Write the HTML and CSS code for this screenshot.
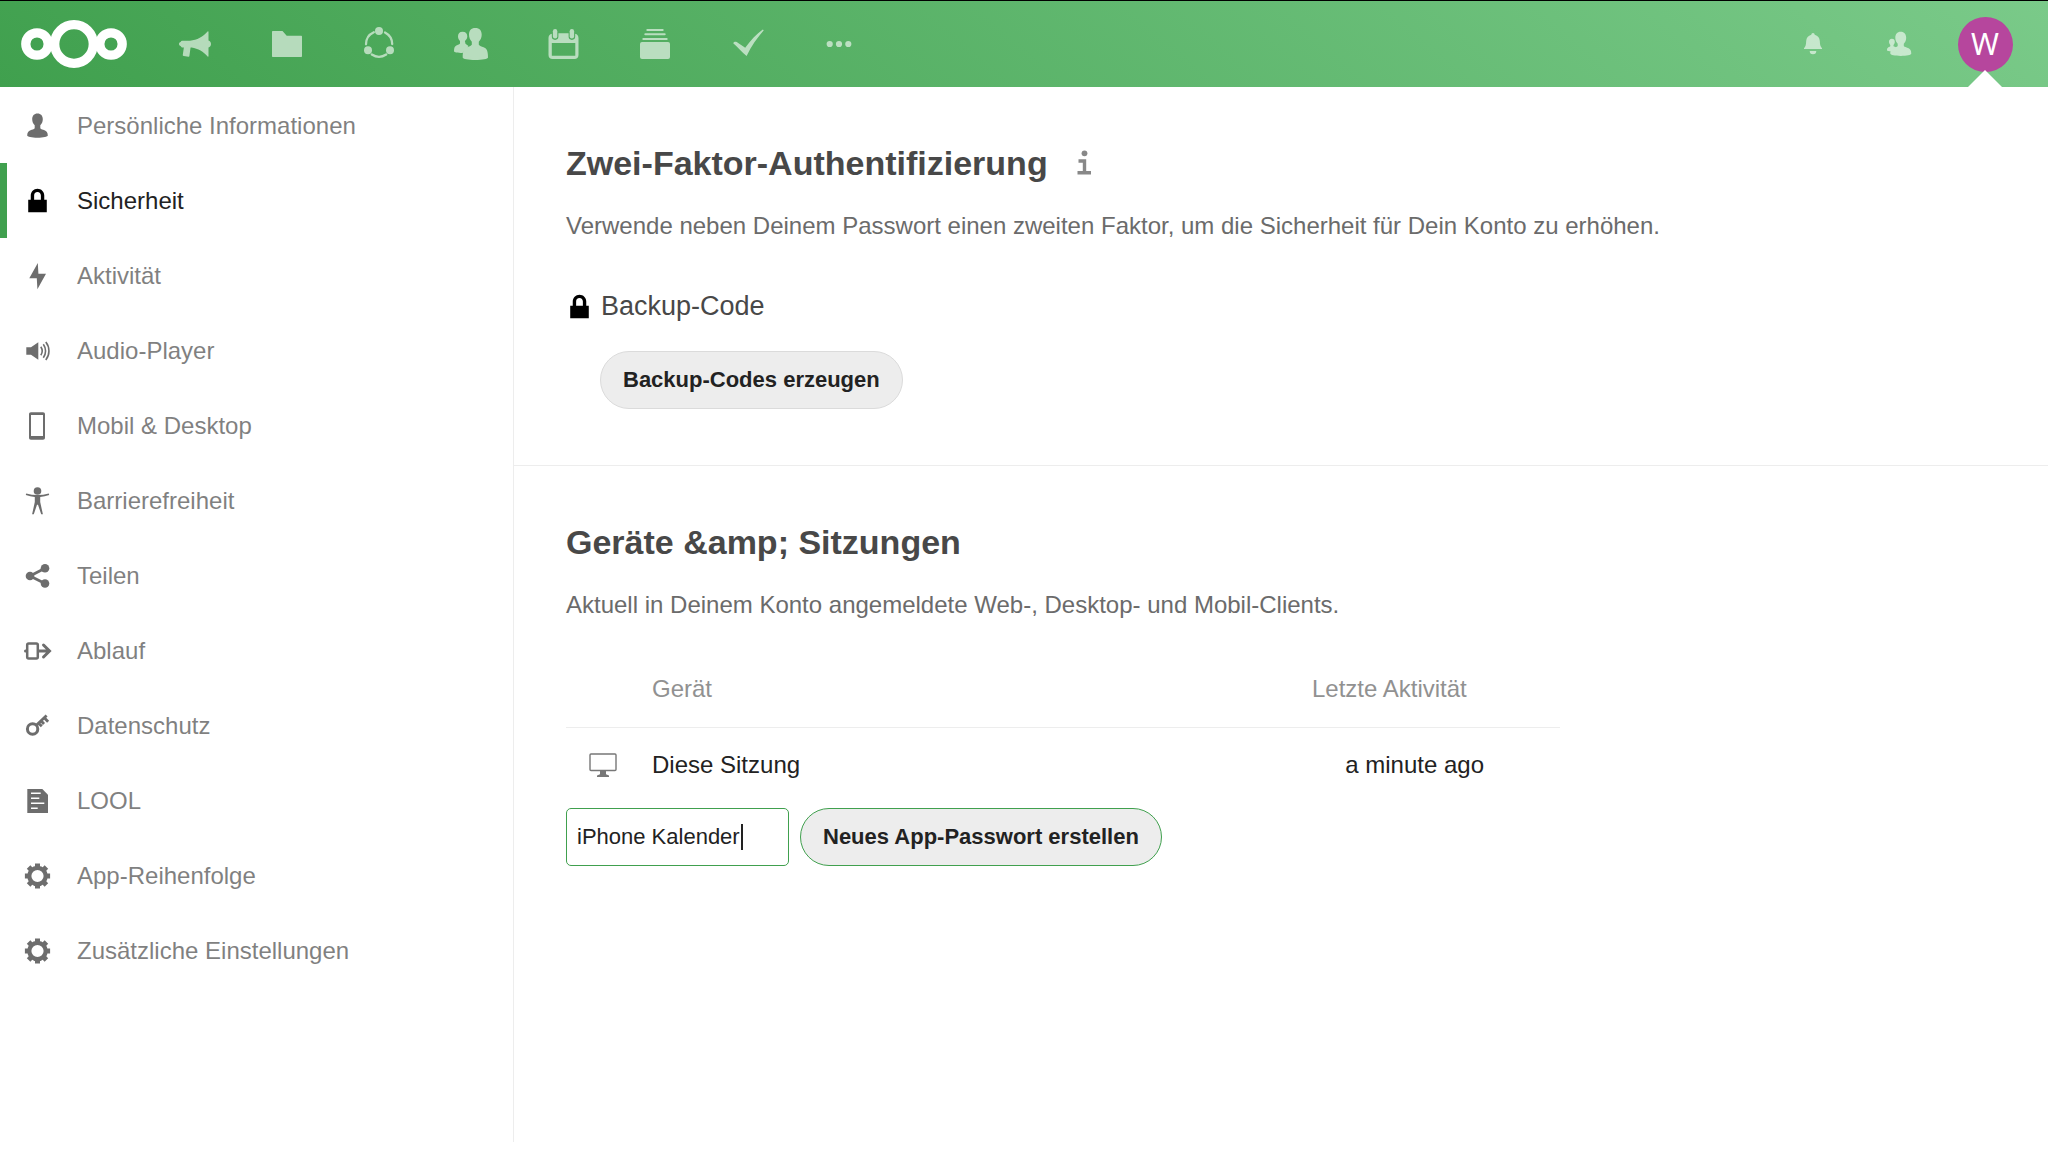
FILE: index.html
```
<!DOCTYPE html>
<html lang="de">
<head>
  <meta charset="UTF-8" />
  <meta name="viewport" content="width=device-width, initial-scale=1.0"/>
  <title>Sicherheit - Einstellungen</title>
  <link rel="stylesheet" href="styles.css">
</head>
<body>
  <!-- shared icons -->
  <svg class="sprite" aria-hidden="true">
    <symbol id="icon-lock" viewBox="0 0 16 16">
      <path d="M8 1C5.7 1 4 2.9 4 5v2.500H2.500V15h11V7.500H12V5c0-2.300-1.800-4-4-4zm0 2c1.200 0 2 1 2 2v2.500H6V5c0-1.200.7-2 2-2z"/>
    </symbol>
    <symbol id="icon-gear" viewBox="0 0 32 32">
      <circle cx="15.500" cy="16" r="8.200" fill="none" stroke="currentColor" stroke-width="4.200"/>
      <path fill="none" stroke="currentColor" stroke-width="5" d="M15.500 3.400v4M15.500 24.600v4M2.900 16h4M24.100 16h4M6.600 7.100l2.800 2.800M21.600 22.100l2.800 2.800M24.400 7.100l-2.800 2.800M9.400 22.100l-2.800 2.800"/>
    </symbol>
  </svg>

  <header class="header">
    <a class="logo" href="#" aria-label="Nextcloud">
      <svg viewBox="0 0 106 50" width="106" height="50" fill="none" stroke="#fff" stroke-width="9.300">
        <circle cx="16" cy="25" r="11.200"/>
        <circle cx="53" cy="25" r="19.300"/>
        <circle cx="90" cy="25" r="11.200"/>
      </svg>
    </a>
    <nav class="apps">
      <a href="#" aria-label="Ankündigungen">
        <svg class="app-icon" viewBox="0 0 36 36">
          <path d="M2 18c0-1.100.6-1.800 1.600-2 .4-.9 1-1.300 2-1.300h7.400c7-.6 13.300-4 17.600-9.200.4-.4.9-.2.900.3V14.500c1.500.4 2.500 1.600 2.500 3.500s-1 3.100-2.500 3.500v8.700c0 .5-.5.700-.9.300-4-4.700-9.500-8-16-9H5.600c-1 0-1.600-.6-2-1.500-1-.2-1.600-.9-1.600-2z"/>
          <path d="M7 20.500h6.700l-1.300 9.600c-.1.500-.4.700-.9.600l-4.800-.7c-.8-.2-1.100-.6-.9-1.300z"/>
        </svg>
      </a>
      <a href="#" aria-label="Dateien">
        <svg class="app-icon" viewBox="0 0 36 36"><path d="M4 5h9.500l4.200 4.700H32c.7 0 1 .4 1 1V30c0 .6-.4 1-1 1H4c-.6 0-1-.4-1-1V6c0-.6.4-1 1-1z"/></svg>
      </a>
      <a href="#" aria-label="Circles">
        <svg class="app-icon" viewBox="0 0 36 36">
          <circle cx="18" cy="5" r="4"/><circle cx="7" cy="24.300" r="4"/><circle cx="29" cy="24.300" r="4"/>
          <path fill="none" stroke="#fff" stroke-width="2.300" stroke-linecap="round" d="M5 18.300A13.300 13.300 0 0 1 12.800 6.200M24 6.500A13.300 13.300 0 0 1 31.200 18M10.800 28.500A13.300 13.300 0 0 0 25.200 28.500"/>
        </svg>
      </a>
      <a href="#" aria-label="Kontakte">
        <svg class="app-icon" viewBox="0 0 36 36">
          <path d="M9.600 5.700C6.500 5.700 5 7.600 5 10.300c0 2 .8 3.600 2 4.700v2.500c-.5.800-1.700 1.200-3 1.700C2 20 1 21 1 25.300c0 .9 3.500 1.700 8.500 1.700l6-7-3-2.200-.6-2.800c1.400-1.100 2.400-2.700 2.400-4.700 0-2.700-1.600-4.600-4.700-4.600z"/>
          <path d="M22.300 2C18 2 16 4.700 16 8.700c0 3 1.200 5.300 2.800 7v3c-.8 1.200-2.900 1.800-4.800 2.600-2.800 1-4.300 3-4.300 10.200 0 1.400 5.700 2.500 12.600 2.500S35 32.900 35 31.500c0-7.200-1.600-9.200-4.400-10.200-1.900-.8-4-1.400-4.800-2.600v-3c1.700-1.700 2.900-4 2.900-7 0-4-2.100-6.700-6.400-6.700z"/>
        </svg>
      </a>
      <a href="#" aria-label="Kalender">
        <svg class="app-icon" viewBox="0 0 36 36">
          <rect x="7.900" y="3" width="4.400" height="9.400" rx="2.200"/><rect x="24.700" y="3" width="4.400" height="9.400" rx="2.200"/>
          <path fill-rule="evenodd" d="M6.800 7.800v2.800a3.300 3.300 0 0 0 6.600 0V7.300h10.200v3.300a3.300 3.300 0 0 0 6.600 0V7.800c2.100.5 3.300 2 3.300 4.200v17c0 2.400-1.600 4-4 4h-22c-2.400 0-4-1.600-4-4V12c0-2.200 1.200-3.700 3.300-4.200zM6.800 17v12.700h23.500V17z"/>
        </svg>
      </a>
      <a href="#" aria-label="Deck">
        <svg class="app-icon" viewBox="0 0 36 36">
          <rect x="3" y="16" width="30" height="17" rx="2"/>
          <path fill="none" stroke="#fff" stroke-width="2" stroke-linecap="round" d="M6.300 13h23.400M8.300 8.300h19.400M10.300 4h15.400"/>
        </svg>
      </a>
      <a href="#" aria-label="Aufgaben">
        <svg class="app-icon" viewBox="0 0 36 36"><path d="M4.200 17.200c.8-1.500 2.300-1.800 3.500-1.100l8.500 5.700C21.500 14.500 27.500 7.800 33.800 3.400l1 .9C28.500 11.500 22.300 20 17.600 30 13.500 26.500 9 21.500 4.200 17.200z"/></svg>
      </a>
      <a href="#" aria-label="Weitere Apps">
        <svg class="app-icon" viewBox="0 0 36 36"><circle cx="8.700" cy="18" r="3.100"/><circle cx="18" cy="18" r="3.100"/><circle cx="27.300" cy="18" r="3.100"/></svg>
      </a>
    </nav>
    <div class="header-right">
      <button type="button" aria-label="Benachrichtigungen">
        <svg class="app-icon" viewBox="0 0 36 36"><path d="M18 7c-1 0-1.600.8-1.700 1.800-3.200.8-4.900 3.200-5.100 6.200-.2 3.700-.4 5.200-2.200 7.200V23h18v-.8c-1.800-2-2-3.500-2.200-7.200-.2-3-1.900-5.400-5.100-6.200C19.600 7.800 19 7 18 7zM14.700 25a3.300 3.300 0 0 0 6.600 0z"/></svg>
      </button>
      <button type="button" aria-label="Kontakte suchen">
        <svg class="app-icon" viewBox="0 0 36 36">
          <path d="M10.900 12.700c-2 0-2.900 1.300-2.900 3.100 0 1.300.6 2.400 1.300 3.100v1.400c-.5.700-3.300.8-3.300 3.900 0 .6 2 1 4.500 1l4.500-4-2.500-1v-1.300c.8-.7 1.300-1.800 1.300-3.100 0-1.800-.9-3.100-2.900-3.100z"/>
          <path d="M19.700 5.700c-3.600 0-5.400 2.600-5.400 6 0 2.600 1 4.600 2.400 6v2.200c-.8 1-2.500 1.300-4.100 2-2 .8-3.300 2-3.300 5.700 0 1.400 4.700 2.400 10.500 2.400s10.500-1 10.500-2.400c0-3.700-1.400-4.900-3.400-5.700-1.600-.7-3.300-1-4.100-2v-2.200c1.400-1.400 2.400-3.400 2.400-6 0-3.400-1.900-6-5.500-6z"/>
        </svg>
      </button>
      <button type="button" class="user-menu" aria-label="Einstellungen"><span class="avatar">W</span></button>
    </div>
  </header>

  <div class="container">
    <nav class="sidebar">
      <ul>
        <li><a href="#">
          <svg class="nav-icon" viewBox="0 0 32 32"><path d="M15.500 3.500c-3.400 0-5.300 2.300-5.300 5.800 0 2.600 1 4.600 2.500 6v3c-.8 1-2.500 1.500-4.200 2-2 .7-3.300 1.900-3.300 5.300 0 1.200 4.600 2.200 10.300 2.200s10.300-1 10.300-2.200c0-3.400-1.300-4.600-3.300-5.300-1.700-.5-3.400-1-4.200-2v-3c1.500-1.400 2.500-3.400 2.500-6 0-3.500-1.900-5.800-5.300-5.800z"/></svg>
          Persönliche Informationen</a></li>
        <li class="active"><a href="#">
          <svg class="nav-icon lock"><use href="#icon-lock"/></svg>
          Sicherheit</a></li>
        <li><a href="#">
          <svg class="nav-icon" viewBox="0 0 32 32"><path d="M15.800 3L7.300 18.300h7.500L15.400 29.300 24 13.700h-7.600z"/></svg>
          Aktivität</a></li>
        <li><a href="#">
          <svg class="nav-icon" viewBox="0 0 32 32">
            <path d="M4.300 12.300H9l7.300-5v17.400l-7.300-5H4.300z"/>
            <path fill="none" stroke="currentColor" stroke-width="1.600" d="M18.800 11.800c1.700 2.500 1.700 5.900 0 8.400M21.300 9.200c3 4 3 9.600 0 13.600M23.800 7c4.200 5.300 4.200 12.700 0 18"/>
          </svg>
          Audio-Player</a></li>
        <li><a href="#">
          <svg class="nav-icon" viewBox="0 0 32 32"><path fill-rule="evenodd" d="M9 2.300h12c1.300 0 2 .8 2 2v23.400c0 1.200-.7 2-2 2H9c-1.300 0-2-.8-2-2V4.300c0-1.200.7-2 2-2zM9 5v21h12V5z"/></svg>
          Mobil &amp; Desktop</a></li>
        <li><a href="#">
          <svg class="nav-icon" viewBox="0 0 32 32">
            <circle cx="15.500" cy="6" r="3.800"/>
            <path d="M4.200 8.500c7.500 2.100 15.100 2.100 22.600 0l.4 1.500c-3 1-6 1.700-9 2.100v5l2.700 12.200h-1.700l-3.200-9.600h-1l-3.200 9.600h-1.700l2.700-12.200v-5c-3-.4-6-1.100-9-2.100z"/>
          </svg>
          Barrierefreiheit</a></li>
        <li><a href="#">
          <svg class="nav-icon" viewBox="0 0 32 32">
            <circle cx="8" cy="16" r="4.300"/><circle cx="23" cy="8.300" r="4.300"/><circle cx="23" cy="23.500" r="4.300"/>
            <path fill="none" stroke="currentColor" stroke-width="2.800" d="M23 8.300L8 16l15 7.500"/>
          </svg>
          Teilen</a></li>
        <li><a href="#">
          <svg class="nav-icon" viewBox="0 0 32 32">
            <rect x="5.200" y="8.500" width="10.600" height="15" rx="1.500" fill="none" stroke="currentColor" stroke-width="2.500"/>
            <path fill="none" stroke="currentColor" stroke-width="3" stroke-linecap="round" d="M3.500 16h.5M17 16h10M21.500 10l6 6-6 6"/>
          </svg>
          Ablauf</a></li>
        <li><a href="#">
          <svg class="nav-icon" viewBox="0 0 32 32">
            <circle cx="10.600" cy="19" r="5.200" fill="none" stroke="currentColor" stroke-width="3"/>
            <path fill="none" stroke="currentColor" stroke-width="2.800" d="M14.300 15.300L24.600 5.500M22.300 7.800l3.800 4M19 10.800l3 3.200M16.500 13.200l3.300 3"/>
          </svg>
          Datenschutz</a></li>
        <li><a href="#">
          <svg class="nav-icon" viewBox="0 0 32 32">
            <path d="M5.300 4h15l5.700 5.700V28H5.300z"/>
            <path stroke="#fff" stroke-width="1.600" d="M9 8.300h9.700M9 13.300h8.300M9 18.300h13.300M9 23.300h6.700"/>
          </svg>
          LOOL</a></li>
        <li><a href="#">
          <svg class="nav-icon"><use href="#icon-gear"/></svg>
          App-Reihenfolge</a></li>
        <li><a href="#">
          <svg class="nav-icon"><use href="#icon-gear"/></svg>
          Zusätzliche Einstellungen</a></li>
      </ul>
    </nav>

    <main class="content">
      <section class="section">
        <h2>Zwei-Faktor-Authentifizierung
          <a class="info" href="#" aria-label="Dokumentation öffnen">
            <svg viewBox="0 0 16 26" width="16" height="26">
              <circle cx="8.500" cy="3.300" r="2.900"/>
              <path fill="none" stroke="currentColor" stroke-width="3.400" d="M2.500 11h6v11.500M1.500 22.800h13.500"/>
            </svg>
          </a>
        </h2>
        <p class="hint">Verwende neben Deinem Passwort einen zweiten Faktor, um die Sicherheit für Dein Konto zu erhöhen.</p>
        <h3><svg class="lock"><use href="#icon-lock"/></svg>Backup-Code</h3>
        <button type="button" class="button backup">Backup-Codes erzeugen</button>
      </section>

      <section class="section">
        <h2>Geräte &amp;amp; Sitzungen</h2>
        <p class="hint">Aktuell in Deinem Konto angemeldete Web-, Desktop- und Mobil-Clients.</p>
        <table class="devices">
          <thead>
            <tr>
              <th class="col-icon"></th>
              <th>Gerät</th>
              <th class="col-date">Letzte Aktivität</th>
              <th class="col-more"></th>
            </tr>
          </thead>
          <tbody>
            <tr>
              <td class="col-icon">
                <svg viewBox="0 0 28 24" width="28" height="24">
                  <rect x="1" y="1" width="26" height="16.500" rx="1" fill="none" stroke="currentColor" stroke-width="1.400"/>
                  <path d="M11 18h6v3.300l3 1.200V24H8v-1.500l3-1.200z"/>
                </svg>
              </td>
              <td>Diese Sitzung</td>
              <td class="col-date">a minute ago</td>
              <td class="col-more"></td>
            </tr>
          </tbody>
        </table>
        <form class="new-password" id="passwordForm">
          <div class="field">
            <input type="text" id="appName" aria-label="App-Name" value="iPhone Kalender" autocomplete="off" />
            <span class="caret" id="caret"></span>
          </div>
          <button type="submit" class="button primary">Neues App-Passwort erstellen</button>
        </form>
      </section>
    </main>
  </div>

  <script>
    const appName = document.getElementById('appName');
    const caret = document.getElementById('caret');

    // own caret until the user edits the field
    appName.addEventListener('focus', function() {
      caret.hidden = true;
    });

    document.getElementById('passwordForm').addEventListener('submit', function(e) {
      e.preventDefault();
    });
  </script>
</body>
</html>
```
FILE: styles.css
```
* {
  box-sizing: border-box;
}
body {
  margin: 0;
  min-height: 100vh;
  padding-bottom: 10px;
  display: flex;
  flex-direction: column;
  font-family: "Liberation Sans", Arial, sans-serif;
  font-size: 24px;
  color: #222;
  background: #fff;
}
a {
  color: inherit;
  text-decoration: none;
}
.sprite {
  display: none;
}

/* header */
.header {
  display: flex;
  height: 87px;
  padding-right: 20px;
  border-top: 1px solid #000;
  background: linear-gradient(40deg, #40a04e 0%, #7aca89 100%);
}
.logo {
  display: flex;
  align-items: center;
  padding: 0 22px 0 21px;
}
.apps {
  display: flex;
}
.apps a,
.header-right button {
  display: flex;
  align-items: center;
  justify-content: center;
  width: 92px;
}
.app-icon {
  width: 36px;
  height: 36px;
  fill: #fff;
  opacity: 0.6;
}
.header-right {
  display: flex;
  margin-left: auto;
}
.header-right button {
  width: 86px;
  padding: 0;
  border: 0;
  background: none;
}
.user-menu {
  position: relative;
}
.user-menu::after {
  content: "";
  position: absolute;
  bottom: 0;
  left: 26px;
  border: 17px solid transparent;
  border-top: 0;
  border-bottom-color: #fff;
}
.avatar {
  width: 55px;
  height: 55px;
  border-radius: 50%;
  background: #b6469d;
  color: #fff;
  font-family: "Noto Sans", sans-serif;
  font-size: 30px;
  line-height: 53px;
}

/* navigation */
.container {
  display: flex;
  flex: 1;
}
.sidebar {
  flex: 0 0 514px;
  border-right: 1px solid #ededed;
}
.sidebar ul {
  margin: 0;
  padding: 1px 0 0;
  list-style: none;
}
.sidebar a {
  display: flex;
  align-items: center;
  gap: 23px;
  height: 75px;
  padding-left: 15px;
  border-left: 7px solid transparent;
  opacity: 0.57;
}
.sidebar .active a {
  border-left-color: #40a04e;
  opacity: 1;
}
.nav-icon {
  width: 32px;
  height: 32px;
  color: #000;
  fill: #000;
}
.nav-icon.lock {
  padding: 2px 3px 3px 2px;
}

/* content */
.content {
  flex: 1;
}
.section {
  padding: 56px 52px;
}
.section + .section {
  border-top: 1px solid #ededed;
}
h2 {
  display: flex;
  align-items: center;
  gap: 28px;
  margin: 0 0 25px;
  font-size: 34px;
  line-height: 40px;
  color: #484848;
}
.info {
  display: flex;
  color: #888;
  fill: #888;
}
.hint {
  margin: 0;
  line-height: 36px;
  color: #6b6b6b;
}
h3 {
  display: flex;
  align-items: center;
  gap: 8px;
  margin: 44px 0 27px;
  font-size: 27px;
  font-weight: normal;
  line-height: 36px;
  color: #484848;
}
h3 .lock {
  width: 27px;
  height: 27px;
  fill: #000;
}
.button {
  height: 58px;
  padding: 0 22px;
  border: 1px solid #dbdbdb;
  border-radius: 29px;
  background: #ededed;
  color: #222;
  font: bold 22px "Liberation Sans", Arial, sans-serif;
}
.button.backup {
  margin-left: 34px;
}
.button.primary {
  border-color: #40a04e;
}

/* device list */
.devices {
  width: 100%;
  max-width: 994px;
  margin-top: 29px;
  border-collapse: collapse;
}
.devices th,
.devices td {
  height: 75px;
  padding: 0;
  text-align: left;
}
.devices th {
  border-bottom: 1px solid #ededed;
  font-weight: normal;
  color: #919191;
}
.devices .col-icon {
  width: 86px;
  padding-left: 23px;
  color: #777;
  fill: #777;
}
.devices .col-icon svg {
  display: block;
}
.devices .col-date {
  width: 172px;
}
.devices td.col-date {
  text-align: right;
}
.devices .col-more {
  width: 76px;
}
.new-password {
  display: flex;
  gap: 11px;
  margin-top: 6px;
}
.field {
  position: relative;
}
.field input {
  display: block;
  width: 223px;
  height: 58px;
  padding: 0 10px;
  border: 1px solid #40a04e;
  border-radius: 5px;
  outline: none;
  color: #222;
  font: 22px "Liberation Sans", Arial, sans-serif;
}
.caret {
  position: absolute;
  top: 16px;
  left: 175px;
  width: 2px;
  height: 26px;
  background: #222;
}
.caret[hidden] {
  display: none;
}
```
